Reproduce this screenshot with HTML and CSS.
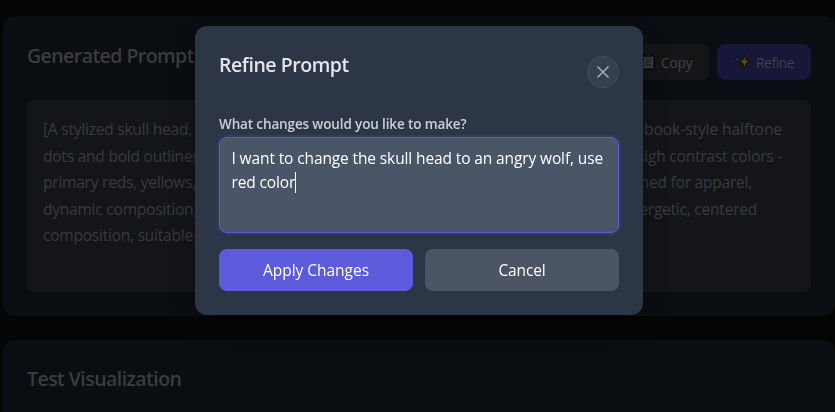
FILE: index.html
```html
<!DOCTYPE html>
<html lang="en">
<head>
    <meta charset="UTF-8">
    <title>Prompt Generator</title>
    <meta name="viewport" content="width=device-width, initial-scale=1.0">
    <link rel="stylesheet" href="styles.css">
</head>
<body>
    <main class="page">
        <section class="card card-prompt">
            <div class="card-header">
                <h2>Generated Prompt</h2>
                <div class="card-actions">
                    <button class="btn-small btn-copy">
                        <svg width="13" height="16" viewBox="0 0 13 16">
                            <rect x="0.5" y="1.5" width="12" height="14" rx="1" fill="#2b1a0c" stroke="#050505"/>
                            <rect x="2" y="3" width="9" height="11" fill="#3b3b3b"/>
                            <path d="M4 3V1.5h1.5V.5h2v1H9V3z" fill="#25282b" stroke="#080808" stroke-width=".6"/>
                            <path d="M3.5 6h6M3.5 8.5h4.5M3.5 11h6" stroke="#17191b"/>
                        </svg>
                        <span>Copy</span>
                    </button>
                    <button class="btn-small btn-refine">
                        <svg width="17" height="16" viewBox="0 0 17 16">
                            <path d="M10.5 1l1.6 4.9L16 7.7l-3.9 1.8-1.6 5.3-1.6-5.3L5 7.7l3.9-1.8z" fill="#554d06" stroke="#050508" stroke-width=".9"/>
                            <path d="M3.5 2.3l.9 2.1 2.1.9-2.1.9-.9 2.1-.9-2.1-2.1-.9 2.1-.9z" fill="#0f4656" stroke="#050508" stroke-width=".6"/>
                            <path d="M6 9.5l.7 1.9 1.8.7-1.8.7L6 14.7l-.7-1.9-1.8-.7 1.8-.7z" fill="#52292f" stroke="#050508" stroke-width=".6"/>
                        </svg>
                        <span>Refine</span>
                    </button>
                </div>
            </div>
            <div class="prompt-box">
                <div class="prompt-line"><span>[A stylized skull head,</span><span class="end-1 book">book-style halftone</span></div>
                <div class="prompt-line"><span>dots and bold outlines,</span><span class="end-1">high contrast colors -</span></div>
                <div class="prompt-line"><span>primary reds, yellows,</span><span class="end-2">designed for apparel,</span></div>
                <div class="prompt-line"><span>dynamic composition,</span><span class="end-3">energetic, centered</span></div>
                <div class="prompt-line"><span>composition, suitable</span></div>
            </div>
        </section>
        <section class="card card-test">
            <h2>Test Visualization</h2>
            <div class="test-box"></div>
        </section>
    </main>

    <div class="modal">
        <div class="modal-header">
            <h3>Refine Prompt</h3>
            <button class="close-btn" aria-label="Close">
                <svg width="14" height="14" viewBox="0 0 14 14">
                    <path d="M1.5 1.5l11 11M12.5 1.5l-11 11" stroke="#a5adba" stroke-width="1.5" fill="none"/>
                </svg>
            </button>
        </div>
        <label class="modal-label">What changes would you like to make?</label>
        <div class="modal-input" role="textbox">
            <div>I want to change the skull head to an angry wolf, use</div>
            <div class="input-line"><span>red color</span><span class="caret"></span></div>
        </div>
        <div class="modal-actions">
            <button class="btn btn-apply">Apply Changes</button>
            <button class="btn btn-cancel">Cancel</button>
        </div>
    </div>
</body>
</html>
```

FILE: styles.css
```css
* {
    box-sizing: border-box;
}
body {
    margin: 0;
    background: #050505;
    font-family: 'Open Sans', 'Noto Sans', sans-serif;
    font-size: 15.5px;
}
h2, h3 {
    margin: 0;
    font-weight: 600;
}
button {
    font-family: inherit;
    border: none;
    padding: 0;
}
.page {
    height: 412px;
    padding: 16px 0 0 3px;
    display: flex;
    flex-direction: column;
    gap: 24px;
}
.card {
    background: #0a0e12;
    border-radius: 12px;
    padding: 24px;
    color: #3c3c3c;
}
.card-prompt {
    height: 300px;
    padding-top: 28px;
}
.card-header {
    display: flex;
    justify-content: space-between;
    height: 56px;
}
.card h2 {
    font-size: 19.5px;
    font-weight: 650;
    line-height: 23px;
    letter-spacing: -0.55px;
}
.card-actions {
    display: flex;
    gap: 8px;
}
.btn-small {
    display: flex;
    align-items: center;
    height: 36px;
    border-radius: 8px;
    font-size: 13.7px;
    color: #414244;
}
.btn-copy {
    width: 84px;
    padding-left: 17px;
    gap: 6px;
    background: #131517;
    letter-spacing: -0.15px;
}
.btn-refine {
    width: 94px;
    padding-left: 17px;
    gap: 5px;
    background: #17173a;
    letter-spacing: -0.35px;
}
.prompt-box {
    height: 192px;
    padding: 16px;
    border-radius: 8px;
    background: #141519;
    color: #3a3a3a;
}
.prompt-line {
    display: flex;
    justify-content: space-between;
    height: 26.5px;
    line-height: 27px;
    letter-spacing: -0.22px;
    white-space: nowrap;
}
.book {
    letter-spacing: -0.05px;
}
.end-1 {
    padding-right: 13px;
}
.end-2 {
    padding-right: 43px;
}
.end-3 {
    padding-right: 38px;
}
.card-test {
    height: 72px;
    padding-top: 27px;
    padding-bottom: 0;
    border-radius: 12px 12px 0 0;
}
.test-box {
    height: 4px;
    margin-top: 18px;
    border-radius: 4px 4px 0 0;
    background: #0d0d0f;
}

/* Modal */
.modal {
    position: fixed;
    top: 26px;
    left: 195px;
    width: 448px;
    height: 289px;
    padding: 24px;
    border-radius: 12px;
    background: #2d3646;
    box-shadow: 0 10px 25px rgba(0, 0, 0, 0.3);
}
.modal-header {
    display: flex;
    justify-content: space-between;
    height: 66px;
}
.modal h3 {
    padding-top: 3px;
    font-size: 19.5px;
    line-height: 24px;
    letter-spacing: -0.45px;
    color: #e2e5ea;
}
.close-btn {
    display: flex;
    align-items: center;
    justify-content: center;
    width: 32px;
    height: 32px;
    margin-top: 6px;
    border: 1px solid #454e5e;
    border-radius: 50%;
    background: #363f4f;
}
.modal-label {
    display: block;
    height: 21px;
    line-height: 17px;
    font-size: 13.5px;
    font-weight: 600;
    letter-spacing: -0.13px;
    color: #cbd0d8;
}
.modal-input {
    height: 96px;
    padding: 8px 11.5px;
    border: 1px solid #5d5bdc;
    border-radius: 8px;
    background: #4a5567;
    box-shadow: 0 0 0 2px #343c5c;
    line-height: 24px;
    letter-spacing: -0.12px;
    color: #fff;
    white-space: nowrap;
}
.input-line {
    display: flex;
    align-items: center;
}
.caret {
    width: 1px;
    height: 21px;
    background: #fff;
}
.modal-actions {
    display: flex;
    gap: 12px;
    margin-top: 16px;
}
.btn {
    flex: 1;
    height: 42px;
    border-radius: 8px;
    font-size: 15.5px;
    letter-spacing: -0.02px;
    color: #fff;
}
.btn-apply {
    background: #5d5bdc;
}
.btn-cancel {
    background: #4b5563;
    letter-spacing: -0.15px;
}
```
